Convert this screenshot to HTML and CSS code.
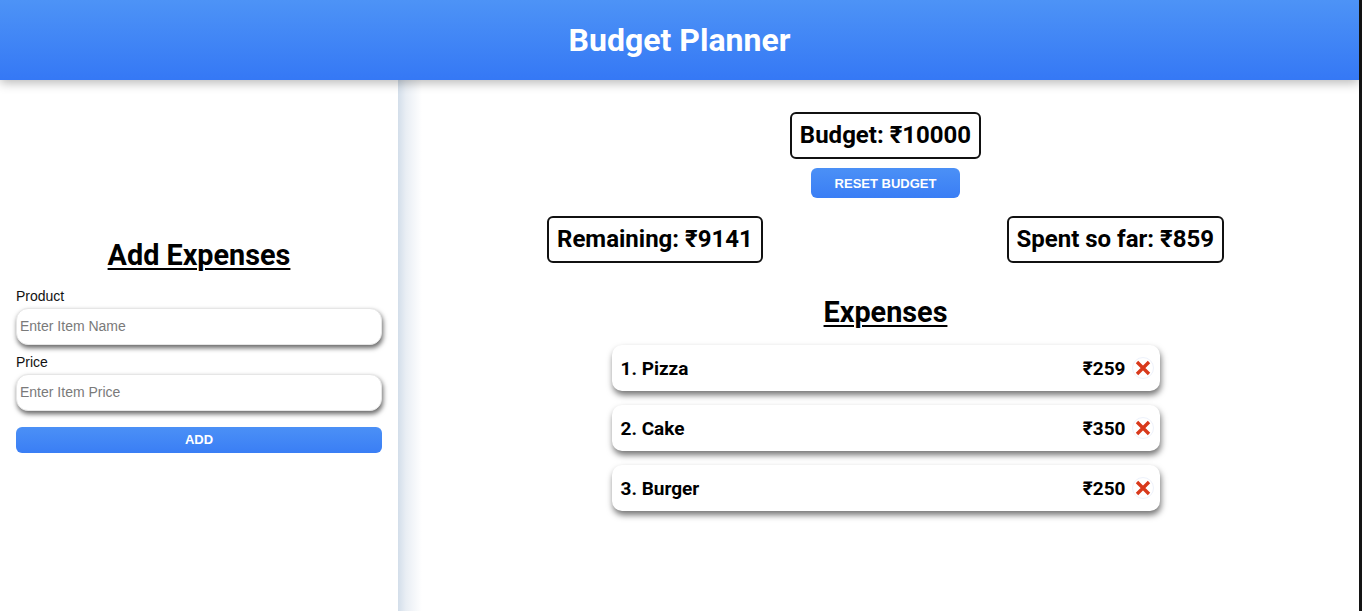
FILE: index.html
```html
<!DOCTYPE html>
<html lang="en">
<head>
<meta charset="utf-8">
<title>Budget Planner</title>
<link rel="stylesheet" href="styles.css">
</head>
<body>
<div class="app">
  <header class="topbar">
    <h1 class="title">Budget Planner</h1>
  </header>
  <main class="main">
    <section class="side">
      <h2 class="heading">Add Expenses</h2>
      <label class="label" for="product">Product</label>
      <input class="field" id="product" type="text" placeholder="Enter Item Name">
      <label class="label label-gap" for="price">Price</label>
      <input class="field" id="price" type="text" placeholder="Enter Item Price">
      <button class="add-btn">ADD</button>
    </section>
    <section class="content">
      <div class="stat">Budget: ₹10000</div>
      <button class="reset-btn">RESET BUDGET</button>
      <div class="stat-row">
        <div class="stat">Remaining: ₹9141</div>
        <div class="stat">Spent so far: ₹859</div>
      </div>
      <h2 class="heading heading-exp">Expenses</h2>
      <ul class="list">
        <li class="item"><span class="name">1. Pizza</span><span class="price">₹259</span><button class="del"><svg width="16" height="16" viewBox="0 0 16 16"><path d="M2 2 L14 14 M14 2 L2 14" stroke="#d8391b" stroke-width="3.4" fill="none"/></svg></button></li>
        <li class="item"><span class="name">2. Cake</span><span class="price">₹350</span><button class="del"><svg width="16" height="16" viewBox="0 0 16 16"><path d="M2 2 L14 14 M14 2 L2 14" stroke="#d8391b" stroke-width="3.4" fill="none"/></svg></button></li>
        <li class="item"><span class="name">3. Burger</span><span class="price">₹250</span><button class="del"><svg width="16" height="16" viewBox="0 0 16 16"><path d="M2 2 L14 14 M14 2 L2 14" stroke="#d8391b" stroke-width="3.4" fill="none"/></svg></button></li>
      </ul>
    </section>
  </main>
</div>
</body>
</html>
```
FILE: styles.css
```css
* { box-sizing: border-box; }
html, body { margin: 0; padding: 0; height: 100%; }
body { background: #fff; font-family: Roboto, "Liberation Sans", Arial, sans-serif; color: #000; overflow: hidden; }

.app {
  height: 100vh;
  display: flex;
  flex-direction: column;
  border-right: 3px solid #141414;
}

.topbar {
  height: 80px;
  flex: none;
  display: flex;
  align-items: center;
  justify-content: center;
  background: linear-gradient(to bottom, #4d93f6, #3578f5);
  box-shadow: 0 3px 10px rgba(0, 0, 0, 0.28);
  position: relative;
  z-index: 2;
}
.title {
  margin: 0;
  color: #fff;
  font-family: Roboto, sans-serif;
  font-weight: 700;
  font-size: 32px;
}

.main {
  flex: 1;
  display: flex;
  min-height: 0;
}

.side {
  width: 398px;
  flex: none;
  display: flex;
  flex-direction: column;
  justify-content: center;
  padding: 0 16px;
}
.heading {
  margin: 0 0 16px;
  text-align: center;
  font-family: Roboto, sans-serif;
  font-weight: 700;
  font-size: 28.8px;
  line-height: 33px;
  text-decoration: underline;
  text-decoration-thickness: 2px;
  text-underline-offset: 3px;
}
.label {
  font-family: "Liberation Sans", Arial, sans-serif;
  font-size: 14px;
  line-height: 16px;
  color: #111;
}
.label-gap { margin-top: 9px; }
.field {
  margin-top: 4px;
  height: 37px;
  width: 100%;
  border: 1px solid #e6e6e6;
  border-radius: 12px;
  padding: 0 3px;
  font-family: "Liberation Sans", Arial, sans-serif;
  font-size: 14px;
  box-shadow: 1px 3px 5px rgba(0, 0, 0, 0.6);
  background: #fff;
  outline: none;
}
.field::placeholder { color: #7a7a7a; }
.add-btn {
  margin-top: 16px;
  height: 26px;
  width: 100%;
  border: none;
  border-radius: 6px;
  background: linear-gradient(to bottom, #4b90f6, #3a7ef5);
  color: #fff;
  font-family: "Liberation Sans", Arial, sans-serif;
  font-weight: 700;
  font-size: 13px;
}

.content {
  flex: 1;
  display: flex;
  flex-direction: column;
  align-items: center;
  padding: 32px 0 0 14px;
  background: linear-gradient(to right, #d3deea 0px, #e9eef4 8px, #ffffff 24px);
}
.stat {
  border: 2px solid #111;
  border-radius: 6px;
  padding: 8px 8px;
  font-family: Roboto, sans-serif;
  font-weight: 700;
  font-size: 24px;
  line-height: 27px;
  white-space: nowrap;
}
.reset-btn {
  margin-top: 9px;
  height: 30px;
  width: 149px;
  border: none;
  border-radius: 6px;
  background: linear-gradient(to bottom, #4b90f6, #3a7ef5);
  color: #fff;
  font-family: "Liberation Sans", Arial, sans-serif;
  font-weight: 700;
  font-size: 13px;
}
.stat-row {
  margin-top: 18px;
  width: 677px;
  display: flex;
  justify-content: space-between;
}
.heading-exp { margin-top: 33px; margin-bottom: 16px; }

.list {
  list-style: none;
  margin: 0;
  padding: 0;
  width: 548px;
  display: flex;
  flex-direction: column;
  gap: 14px;
}
.item {
  height: 46px;
  display: flex;
  align-items: center;
  padding: 0 6px 0 9px;
  border-radius: 10px;
  background: #fff;
  box-shadow: 1px 4px 6px rgba(0, 0, 0, 0.55);
  font-family: Roboto, sans-serif;
  font-weight: 700;
  font-size: 19px;
}
.name { flex: 1; }
.price { margin-right: 6px; }
.del {
  width: 22px;
  height: 22px;
  padding: 0;
  border: 1px solid #eef2fb;
  border-radius: 50%;
  background: #fff;
  display: flex;
  align-items: center;
  justify-content: center;
}
.del svg { display: block; }
```
